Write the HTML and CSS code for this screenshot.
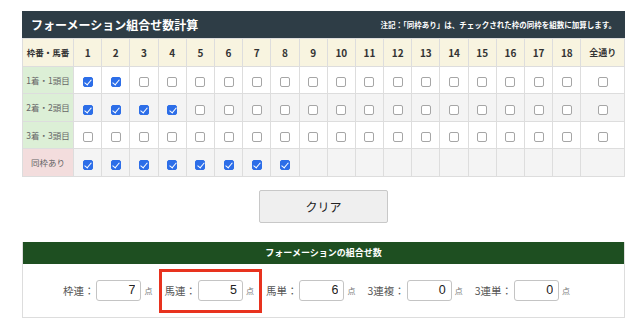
FILE: index.html
```html
<!DOCTYPE html>
<html lang="ja">
<head>
    <meta charset="UTF-8">
    <meta name="viewport" content="width=device-width, initial-scale=1.0">
    <title>フォーメーション組合せ数計算</title>
    <link rel="stylesheet" href="styles.css">
</head>
<body>

<div class="calc">
    <div class="calc-head">
        <h2 class="calc-title">フォーメーション組合せ数計算</h2>
        <p class="calc-note">注記：「同枠あり」は、チェックされた枠の同枠を組数に加算します。</p>
    </div>

    <table class="grid">
        <colgroup>
            <col class="col-label">
            <col span="18" class="col-num">
            <col class="col-all">
        </colgroup>
        <thead>
            <tr id="head-row">
                <th>枠番・馬番</th>
            </tr>
        </thead>
        <tbody id="grid-body"></tbody>
    </table>

    <div class="actions">
        <button class="clear-btn" onclick="clearAll()">クリア</button>
    </div>

    <div class="result">
        <div class="result-head">フォーメーションの組合せ数</div>
        <div class="result-body">
            <span class="item"><label>枠連：</label><input class="num" id="r-waku" value="7" readonly><span class="unit">点</span></span>
            <span class="item marked"><label>馬連：</label><input class="num" id="r-umaren" value="5" readonly><span class="unit">点</span></span>
            <span class="item"><label>馬単：</label><input class="num" id="r-umatan" value="6" readonly><span class="unit">点</span></span>
            <span class="item"><label>3連複：</label><input class="num" id="r-fuku" value="0" readonly><span class="unit">点</span></span>
            <span class="item"><label>3連単：</label><input class="num" id="r-tan" value="0" readonly><span class="unit">点</span></span>
        </div>
    </div>
</div>

<script>
    const rows = [
        { label: '1着・1頭目', cls: 'lbl-green', checked: [1, 2] },
        { label: '2着・2頭目', cls: 'lbl-green', checked: [1, 2, 3, 4] },
        { label: '3着・3頭目', cls: 'lbl-green', checked: [] },
        { label: '同枠あり', cls: 'lbl-pink', checked: [1, 2, 3, 4, 5, 6, 7, 8], only: 8 }
    ];

    const headRow = document.getElementById('head-row');
    for (let i = 1; i <= 18; i++) {
        const th = document.createElement('th');
        th.textContent = i;
        headRow.appendChild(th);
    }
    const allTh = document.createElement('th');
    allTh.textContent = '全通り';
    headRow.appendChild(allTh);

    const body = document.getElementById('grid-body');
    rows.forEach(function (row) {
        const tr = document.createElement('tr');
        const th = document.createElement('th');
        th.className = row.cls;
        th.textContent = row.label;
        tr.appendChild(th);
        for (let i = 1; i <= 19; i++) {
            const td = document.createElement('td');
            if (!row.only || i <= row.only) {
                const box = document.createElement('input');
                box.type = 'checkbox';
                box.className = 'box';
                box.checked = row.checked.includes(i);
                td.appendChild(box);
            }
            tr.appendChild(td);
        }
        body.appendChild(tr);
    });

    function clearAll() {
        document.querySelectorAll('.box').forEach(function (b) { b.checked = false; });
    }
</script>

</body>
</html>
```

FILE: styles.css
```css
body {
    margin: 0;
    background-color: #ffffff;
    font-family: "Noto Sans CJK JP", "Noto Sans", sans-serif;
    color: #333333;
}
.calc {
    width: 603px;
    margin: 11px 0 0 22px;
}
.calc-head {
    display: flex;
    justify-content: space-between;
    align-items: center;
    height: 27px;
    padding: 0 9px;
    background-color: #2e3d46;
    color: #ffffff;
}
.calc-title {
    margin: 0;
    font-size: 12px;
    font-weight: bold;
}
.calc-note {
    margin: 0;
    font-size: 7.5px;
    font-weight: bold;
}
.grid {
    width: 603px;
    table-layout: fixed;
    border-collapse: collapse;
}
.col-label {
    width: 51px;
}
.col-num {
    width: 28.2px;
}
.grid th,
.grid td {
    height: 26.5px;
    padding: 0;
    border: 1px solid #dddddd;
    text-align: center;
}
.grid thead th {
    background-color: #f8f4e0;
    font-size: 10px;
    font-weight: bold;
    color: #333333;
}
.grid thead th:first-child {
    font-size: 8.5px;
}
.grid thead th:last-child {
    font-size: 9px;
}
.grid tbody th {
    font-size: 8.5px;
    font-weight: normal;
    color: #666666;
}
.lbl-green {
    background-color: #dcefd6;
}
.lbl-pink {
    background-color: #f3dddd;
}
.grid tbody td {
    background-color: #ffffff;
}
.grid tbody tr:nth-child(even) td {
    background-color: #f4f4f4;
}
.box {
    appearance: none;
    -webkit-appearance: none;
    position: relative;
    display: inline-block;
    width: 10px;
    height: 10px;
    margin: 0;
    border: 1px solid #a6a6a6;
    border-radius: 2px;
    background-color: #ffffff;
    vertical-align: middle;
}
.box:checked {
    border-color: #2d6ee8;
    background-color: #2d6ee8;
}
.box:checked::after {
    content: "";
    position: absolute;
    left: 2.5px;
    top: 0px;
    width: 3px;
    height: 6px;
    border: solid #ffffff;
    border-width: 0 1.5px 1.5px 0;
    transform: rotate(40deg);
}
.actions {
    display: flex;
    justify-content: center;
    padding: 13px 0 19px;
}
.clear-btn {
    width: 129px;
    height: 33px;
    border: 1px solid #c8c8c8;
    border-radius: 2px;
    background-color: #efefef;
    font-family: "Noto Sans CJK JP", sans-serif;
    font-size: 12px;
    color: #222222;
    cursor: pointer;
}
.result {
    border: 1px solid #dddddd;
    border-top: none;
}
.result-head {
    height: 22px;
    line-height: 22px;
    background-color: #1e4f21;
    color: #ffffff;
    font-size: 9px;
    font-weight: bold;
    text-align: center;
}
.result-body {
    display: flex;
    justify-content: center;
    align-items: center;
    gap: 12px;
    height: 53px;
    padding-right: 14px;
}
.item {
    position: relative;
    display: flex;
    align-items: center;
    font-size: 10.5px;
    color: #555555;
}
.item label {
    margin-right: 2px;
}
.num {
    width: 45px;
    height: 21px;
    box-sizing: border-box;
    padding: 0 5px;
    border: 1px solid #c4c4c4;
    border-radius: 3px;
    font-family: "Liberation Sans", sans-serif;
    font-size: 12.5px;
    color: #222222;
    text-align: right;
}
.unit {
    margin-left: 3px;
    font-size: 8px;
    color: #777777;
}
.marked::after {
    content: "";
    position: absolute;
    left: -5px;
    right: -8px;
    top: -11px;
    bottom: -12px;
    border: 3px solid #e8321e;
}
```
